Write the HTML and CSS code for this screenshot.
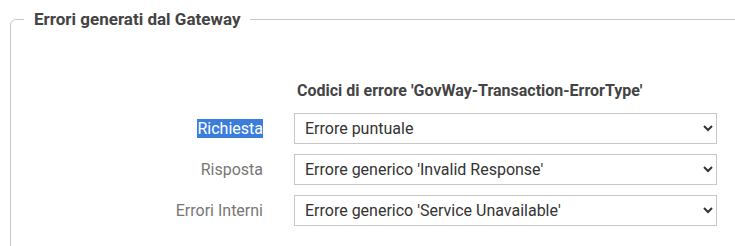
FILE: index.html
```html
<!DOCTYPE html>
<html>
  <head>
    <title>Errori generati dal Gateway</title>
    <link rel="stylesheet" href="styles.css">
  </head>
  <body>
    <fieldset class="section">
      <legend>Errori generati dal Gateway</legend>
      <div class="form-grid">
        <div></div>
        <div class="col-title">Codici di errore 'GovWay-Transaction-ErrorType'</div>

        <label class="field-label"><span class="selected">Richiesta</span></label>
        <select class="field-select">
          <option>Errore puntuale</option>
        </select>

        <label class="field-label">Risposta</label>
        <select class="field-select">
          <option>Errore generico 'Invalid Response'</option>
        </select>

        <label class="field-label">Errori Interni</label>
        <select class="field-select">
          <option>Errore generico 'Service Unavailable'</option>
        </select>
      </div>
    </fieldset>
  </body>
</html>
```

FILE: styles.css
```css
body {
  margin: 0;
  background-color: #fff;
  font-family: Roboto, 'Liberation Sans', sans-serif;
  color: #333;
}

.section {
  margin: 9px -20px 0 10px;
  padding: 0 0 40px 0;
  border: 1px solid #c8c8c8;
  border-top-left-radius: 6px;
}

.section legend {
  margin-left: 13px;
  padding: 0 10px;
  font-size: 17px;
  font-weight: bold;
  color: #444;
}

.form-grid {
  display: grid;
  grid-template-columns: 252px 423px;
  column-gap: 31px;
  row-gap: 10px;
  align-items: center;
  padding-top: 52px;
}

.col-title {
  padding-left: 3px;
  font-size: 16px;
  font-weight: bold;
  color: #444;
  margin-bottom: 3px;
}

.field-label {
  text-align: right;
  font-size: 16px;
  color: #777;
}

.selected {
  background-color: #3b7ddd;
  color: #fff;
}

.field-select {
  height: 31px;
  padding: 0 6px;
  border: 1px solid #c8c8c8;
  border-radius: 0;
  background-color: #fff;
  font-family: Roboto, 'Liberation Sans', sans-serif;
  font-size: 16px;
  color: #333;
}
```
